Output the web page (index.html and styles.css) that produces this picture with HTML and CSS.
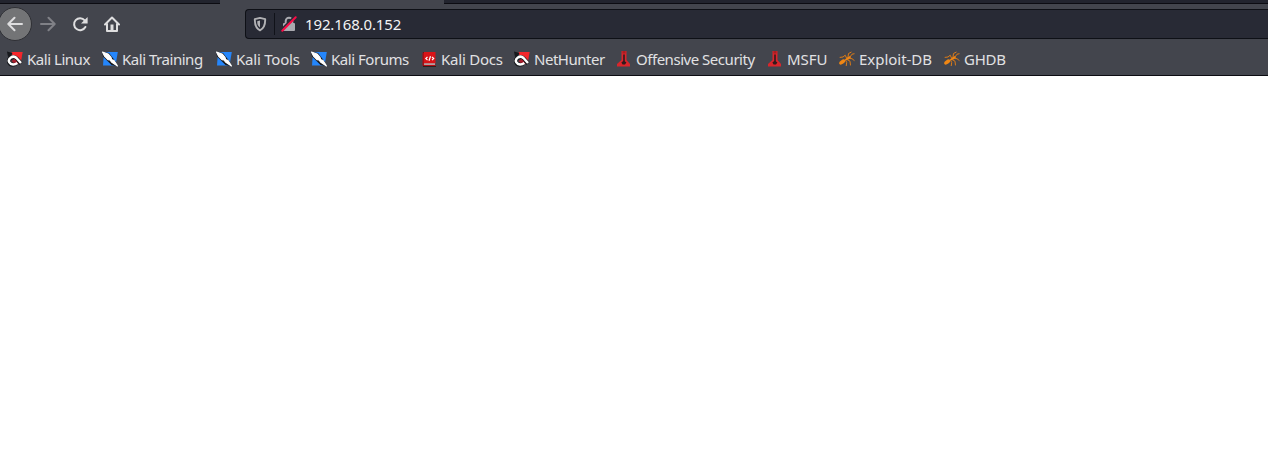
FILE: index.html
```html
<!DOCTYPE html>
<html lang="en">
<head>
<meta charset="utf-8">
<title>192.168.0.152</title>
<link rel="stylesheet" href="styles.css">
</head>
<body>
<svg class="sprite" aria-hidden="true">
  <symbol id="dragon" viewBox="0 0 16 16">
    <path d="M4.500 1h11.200L13.500 13H8z" fill="#f5262b"/>
    <path d="M0 .5l5.500 1.500-1.500 3-3 1z" fill="#17191d"/>
    <path d="M14 12.500L9.500 7.500C6 4 .5 8 2.300 11.500c1.500 3 5 2.500 7 .7" fill="none" stroke="#17191d" stroke-width="4.200"/>
    <path d="M4.500 10l3-2 2.500 2.500-3 1.800z" fill="#a71c2b"/>
    <path d="M14 12L9.500 7C6 3.500.5 7.800 2.300 11.300c1.500 3 5.700 2.500 8 .7" fill="none" stroke="#fff" stroke-width="2.500"/>
  </symbol>
  <symbol id="knife" viewBox="0 0 16 16">
    <path d="M2 1h13.800L13.500 14.500H1z" fill="#2586fb"/>
    <path d="M0 .5l7 1.500 7 9V15l-4.500-1L1 5.500z" fill="#17191d"/>
    <path d="M.5 1L6 3l3 3.500.5 2 2.500 1 3.500 5.500-6-4-1.500-2-2-.3L2.500 5z" fill="#fff" stroke="#fff" stroke-width="1.200" stroke-linejoin="round"/>
  </symbol>
  <symbol id="book" viewBox="0 0 16 16">
    <path d="M2 1h1.500V15H15v1H2z" fill="#292020"/>
    <path d="M3 1h11.500v11.500H3z" fill="#d91418"/>
    <path d="M1.500 1.500H3v13.300H1.500z" fill="#a90d12"/>
    <path d="M3 12.500h11v1.300H3z" fill="#ddd"/>
    <path d="M3 13.800h11.500V15H3z" fill="#b60d12"/>
    <path d="M6.500 5.800L4.800 7.500l1.700 1.700M11 5.800l1.700 1.700L11 9.200M9.500 5.200L8 9.800" fill="none" stroke="#fff" stroke-width="1.200"/>
  </symbol>
  <symbol id="tower" viewBox="0 0 16 16">
    <path d="M5.500 0h5v9l3.500 4v2.500H1V13l4.500-4z" fill="#d9252b"/>
    <path d="M7.200 3.500h1.600v6.700l1.600 1.300-1.400 2H6.600l-1.200-2 1.800-1.500z" fill="#301a1d"/>
    <path d="M6.500 0h3v2.500h-3z" fill="#a91d21"/>
  </symbol>
  <symbol id="bug" viewBox="0 0 16 16">
    <ellipse cx="3.200" cy="11" rx="3.400" ry="1.900" transform="rotate(-35 3.200 11)" fill="#ef8614"/>
    <path d="M5 9.500L8 6.500l3-1.500 1 2-3.500 2z" fill="#ef8614"/>
    <path d="M7.500 7L6.200 4.200 4 6l-3.300.4M9 6l.5-3.500 3-1.500M11 6l2-2.800 2.500-.5M10 7.500l3 .2 2.500 2M8 8.500l3 1.700.5 4.200M6.500 9l1.200 2.500-.5 3.500" fill="none" stroke="#dc7b17" stroke-width="1"/>
  </symbol>
</svg>
<header class="browser">
  <div class="tabs"><div class="tab-rest"></div><div class="tab-active"></div><div class="tab-rest"></div></div>
  <div class="toolbar">
    <nav class="nav">
      <button class="nav-button back" aria-label="Back"><svg class="nav-icon" viewBox="0 0 16 16"><path d="M15 8H1.500M7.500 1.800L1.300 8l6.200 6.200"/></svg></button>
      <button class="nav-button forward" aria-label="Forward"><svg class="nav-icon" viewBox="0 0 16 16"><path d="M1 8h13.500M8.500 1.800L14.700 8l-6.200 6.200"/></svg></button>
      <button class="nav-button" aria-label="Reload"><svg class="nav-icon" viewBox="0 0 16 16"><path d="M12.700 4.300A6 6 0 1 0 13.400 11"/><path d="M15.600 1v6.500H9z" class="solid"/></svg></button>
      <button class="nav-button" aria-label="Home"><svg class="nav-icon" viewBox="0 0 16 16"><path d="M1 8.500L8 1.500l7 7M3 7.500V15h10V7.500"/><path d="M6.500 8.500h3V14h-3z" class="solid"/></svg></button>
    </nav>
    <div class="address">
      <svg class="shield" viewBox="0 0 16 16"><path d="M8 1.900l5.200 1.300c.1 4.900-.6 8.900-5.200 11.100C3.400 12.100 2.700 8.100 2.800 3.200z" fill="none" stroke="#b2b2b5" stroke-width="1.900" stroke-linejoin="round"/><path d="M8 4.600v7C5.800 10.200 5.200 8 5.200 5.300z" fill="#b2b2b5"/></svg>
      <span class="divider"></span>
      <svg class="lock" viewBox="0 0 16 16"><path d="M4.700 7V5a3.300 3.300 0 0 1 6.600 0v2" fill="none" stroke="#aaaab0" stroke-width="2"/><rect x="2" y="7" width="12" height="8" rx="1" fill="#aaaab0"/><path d="M.5 13.500L13.500.5" stroke="#292b36" stroke-width="2"/><path d="M1.300 14.700L14.700 1.300" stroke="#fa0b46" stroke-width="2" stroke-linecap="round"/></svg>
      <span class="url">192.168.0.152</span>
    </div>
  </div>
  <nav class="bookmarks">
    <span class="bookmark tight"><svg><use href="#dragon"/></svg>Kali Linux</span>
    <span class="bookmark tight"><svg><use href="#knife"/></svg>Kali Training</span>
    <span class="bookmark snug"><svg><use href="#knife"/></svg>Kali Tools</span>
    <span class="bookmark tight"><svg><use href="#knife"/></svg>Kali Forums</span>
    <span class="bookmark snug"><svg><use href="#book"/></svg>Kali Docs</span>
    <span class="bookmark tight"><svg><use href="#dragon"/></svg>NetHunter</span>
    <span class="bookmark tight"><svg><use href="#tower"/></svg>Offensive Security</span>
    <span class="bookmark"><svg><use href="#tower"/></svg>MSFU</span>
    <span class="bookmark"><svg><use href="#bug"/></svg>Exploit-DB</span>
    <span class="bookmark snug"><svg><use href="#bug"/></svg>GHDB</span>
  </nav>
</header>
<main class="page"></main>
</body>
</html>
```

FILE: styles.css
```css
* { box-sizing: border-box; }
body { margin: 0; height: 100vh; overflow: hidden; background: #fff; font-family: "Noto Sans", sans-serif; font-size: 15px; display: flex; flex-direction: column; }
.sprite { display: none; }
.browser { height: 76px; flex: none; background: #43454d; border-bottom: 1px solid #0c0c12; }
.tabs { display: flex; height: 4px; }
.tab-rest { background: #22242e; border-bottom: 1px solid #0c0c12; width: 220px; }
.tab-rest:last-child { flex: 1; }
.tab-active { width: 224px; background: #43454d; }
.toolbar { display: flex; height: 40px; }
.nav { display: flex; width: 246px; margin-left: -2px; flex: none; }
.nav-button { display: flex; width: 32px; height: 32px; margin-top: 4px; padding: 0; border: 0; background: none; color: #dededf; align-items: center; justify-content: center; flex: none; }
.nav .back { width: 34px; height: 34px; margin-top: 3px; border: 1px solid #2f3035; border-radius: 50%; background: #737476; }
.forward { color: #808187; }
.nav-icon { width: 16px; height: 16px; fill: none; stroke: currentColor; stroke-width: 2; stroke-linejoin: round; stroke-linecap: round; }
.solid { fill: currentColor; stroke: none; }
.address { display: flex; flex: 1; align-items: center; height: 30px; margin: 5px 0 0 1px; padding-left: 6px; background: #282a35; border: 1px solid #0e1016; border-right: 0; border-radius: 4px 0 0 4px; color: #f3f3f4; }
.shield, .lock { width: 16px; height: 16px; flex: none; }
.divider { width: 1px; height: 22px; margin: 0 6px; background: #101219; }
.url { margin-left: 8px; line-height: 20px; letter-spacing: -.13px; }
.bookmarks { display: grid; grid-template-columns: 95px 114px 95px 110px 93px 102px 151px 72px 105px 70px; margin-left: 7px; height: 31px; color: #e1e1e3; }
.bookmark { display: flex; align-items: center; height: 30px; line-height: 20px; white-space: nowrap; gap: 4px; letter-spacing: -.03px; }
.tight { letter-spacing: -.47px; }
.snug { letter-spacing: -.22px; }
.bookmark svg { width: 16px; height: 16px; flex: none; }
.page { flex: 1; background: #fff; }
```
